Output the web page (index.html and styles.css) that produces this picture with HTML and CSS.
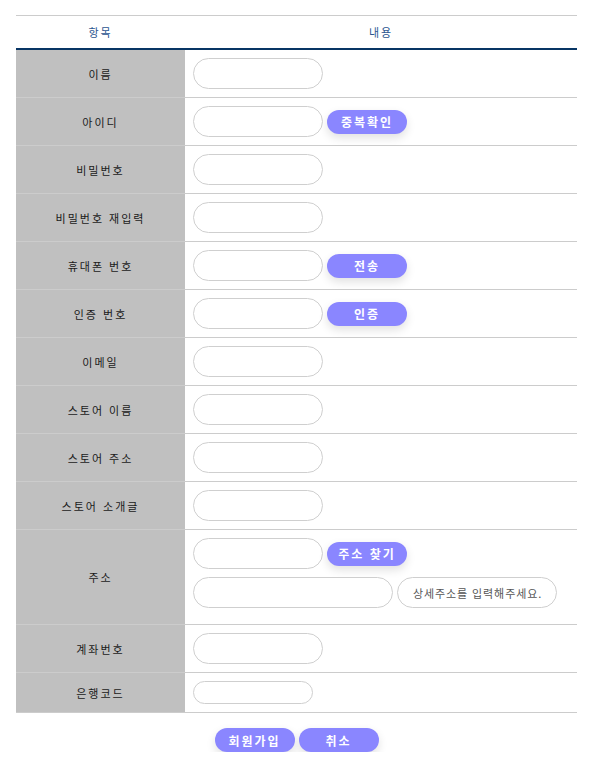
FILE: index.html
```html
<!DOCTYPE html>
<html lang="ko">
<head>
<meta charset="utf-8">
<link rel="stylesheet" href="styles.css">
</head>
<body>
<div class="wrap">
<table class="form">
  <thead>
    <tr><th class="c1">항목</th><th>내용</th></tr>
  </thead>
  <tbody>
    <tr><td class="label">이름</td><td class="val"><input class="inp" type="text"></td></tr>
    <tr><td class="label">아이디</td><td class="val"><input class="inp" type="text"><button class="btn">중복확인</button></td></tr>
    <tr><td class="label">비밀번호</td><td class="val"><input class="inp" type="password"></td></tr>
    <tr><td class="label">비밀번호 재입력</td><td class="val"><input class="inp" type="password"></td></tr>
    <tr><td class="label">휴대폰 번호</td><td class="val"><input class="inp" type="text"><button class="btn">전송</button></td></tr>
    <tr><td class="label">인증 번호</td><td class="val"><input class="inp" type="text"><button class="btn">인증</button></td></tr>
    <tr><td class="label">이메일</td><td class="val"><input class="inp" type="text"></td></tr>
    <tr><td class="label">스토어 이름</td><td class="val"><input class="inp" type="text"></td></tr>
    <tr><td class="label">스토어 주소</td><td class="val"><input class="inp" type="text"></td></tr>
    <tr><td class="label">스토어 소개글</td><td class="val"><input class="inp" type="text"></td></tr>
    <tr><td class="label">주소</td><td class="val addr">
      <div class="line"><input class="inp" type="text"><button class="btn">주소 찾기</button></div>
      <div class="line"><input class="inp wide" type="text"><input class="inp detail" type="text" placeholder="상세주소를 입력해주세요."></div>
    </td></tr>
    <tr><td class="label">계좌번호</td><td class="val"><input class="inp" type="text"></td></tr>
    <tr class="short"><td class="label">은행코드</td><td class="val"><input class="inp small" type="text"></td></tr>
  </tbody>
</table>
<div class="actions">
  <button class="btn">회원가입</button><button class="btn">취소</button>
</div>
</div>
</body>
</html>
```
FILE: styles.css
```css
html, body {
  margin: 0;
  padding: 0;
  background: #fff;
}
body {
  font-family: "Noto Sans CJK KR", "Noto Sans", sans-serif;
  font-size: 11px;
  color: #222;
}
.wrap {
  padding: 15px 25px 0 16px;
}
.form {
  width: 561px;
  border-collapse: collapse;
  border-top: 1px solid #cccccc;
}
.form th {
  height: 32px;
  padding: 0;
  font-weight: normal;
  font-size: 11px;
  letter-spacing: 2px;
  color: #2b5590;
  border-bottom: 2px solid #083564;
  text-align: center;
}
.form th.c1 {
  width: 169px;
}
.form td {
  padding: 0;
  border-bottom: 1px solid #cccccc;
}
.form td.label {
  background: #c0c0c0;
  text-align: center;
  letter-spacing: 2px;
  color: #1a1a1a;
  height: 47px;
}
.form td.val {
  padding: 0 8px;
  height: 47px;
}
.form tr.short td {
  height: 39px;
}
.addr {
  padding-top: 8px !important;
  padding-bottom: 16px !important;
}
.line {
  display: flex;
  align-items: center;
}
.line + .line {
  margin-top: 8px;
}
.val {
  white-space: nowrap;
}
.inp {
  box-sizing: border-box;
  width: 130px;
  height: 31px;
  border: 1px solid #cfcfcf;
  border-radius: 16px;
  background: #fff;
  padding: 0 12px;
  margin: 0;
  vertical-align: middle;
  font-family: "Noto Sans CJK KR", sans-serif;
  font-size: 11px;
  outline: none;
}
.inp.wide {
  width: 200px;
}
.inp.detail {
  width: 160px;
  margin-left: 4px;
  padding: 0 0 0 15px;
  color: #555;
}
.inp.detail::placeholder {
  color: #555;
  letter-spacing: 0.9px;
}
.inp.small {
  width: 120px;
  height: 23px;
  border-radius: 12px;
}
.btn {
  box-sizing: border-box;
  width: 80px;
  height: 24px;
  margin: 0 0 0 4px;
  padding: 0;
  border: none;
  border-radius: 12px;
  background: #8a86ff;
  color: #fff;
  font-family: "Noto Sans CJK KR", sans-serif;
  font-size: 12px;
  font-weight: bold;
  letter-spacing: 2px;
  vertical-align: middle;
  box-shadow: 0 4px 10px rgba(0, 0, 0, 0.12);
}
.actions {
  width: 561px;
  display: flex;
  justify-content: center;
  padding-top: 15px;
}
.actions .btn {
  margin: 0 2px;
}
```
